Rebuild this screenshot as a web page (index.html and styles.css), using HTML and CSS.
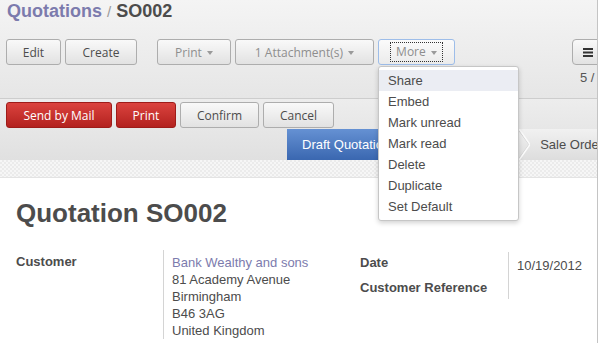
FILE: index.html
```html
<!DOCTYPE html>
<html lang="en">
<head>
    <meta charset="UTF-8">
    <title>Quotations / SO002</title>
    <link rel="stylesheet" href="styles.css">
</head>
<body>
    <div class="page">
        <div class="view-header">
            <h2 class="breadcrumb">
                <a class="crumb" href="#">Quotations</a>
                <span class="sep">/</span>
                <span class="current">SO002</span>
            </h2>
            <div class="header-row">
                <div class="btn-groups">
                    <div class="btn-group">
                        <button class="btn w-edit">Edit</button>
                        <button class="btn w-create">Create</button>
                    </div>
                    <div class="btn-group">
                        <button class="btn muted w-print">Print <span class="caret"></span></button>
                        <button class="btn muted w-attach">1 Attachment(s) <span class="caret"></span></button>
                        <div class="dropdown">
                            <button class="btn muted focused w-more"><span class="focus-ring">More <span class="caret"></span></span></button>
                            <ul class="menu">
                                <li class="active">Share</li>
                                <li>Embed</li>
                                <li>Mark unread</li>
                                <li>Mark read</li>
                                <li>Delete</li>
                                <li>Duplicate</li>
                                <li>Set Default</li>
                            </ul>
                        </div>
                    </div>
                </div>
                <div class="pager-col">
                    <button class="btn switch">
                        <svg width="10" height="9" viewBox="0 0 10 9"><rect x="0" y="0" width="10" height="2" fill="#333"/><rect x="0" y="3.5" width="10" height="2" fill="#333"/><rect x="0" y="7" width="10" height="2" fill="#333"/></svg>
                    </button>
                    <div class="pager">5 /</div>
                </div>
            </div>
        </div>

        <div class="form-header">
            <div class="btn-group">
                <button class="btn primary w-mail">Send by Mail</button>
                <button class="btn primary w-rprint">Print</button>
                <button class="btn w-confirm">Confirm</button>
                <button class="btn w-cancel">Cancel</button>
            </div>
            <ul class="statusbar">
                <li class="step current">Draft Quotation</li>
                <li class="arrow">
                    <svg width="13" height="31" viewBox="0 0 13 31">
                        <defs>
                            <linearGradient id="blue" x1="0" y1="0" x2="0" y2="1">
                                <stop offset="0" stop-color="#6591d3"/>
                                <stop offset="1" stop-color="#3a67b0"/>
                            </linearGradient>
                        </defs>
                        <polygon points="0,0 12,15.5 0,31" fill="url(#blue)"/>
                    </svg>
                </li>
                <li class="step hidden-step"></li>
                <li class="arrow">
                    <svg width="13" height="31" viewBox="0 0 13 31">
                        <polyline points="0,-1 12,15.5 0,32" fill="none" stroke="#d2d2d2" stroke-width="1"/>
                        <polyline points="1.5,-1 13,15.5 1.5,32" fill="none" stroke="#fbfbfb" stroke-width="1.5"/>
                    </svg>
                </li>
                <li class="step last">Sale Orde</li>
            </ul>
        </div>

        <div class="sheet-bg"></div>

        <div class="sheet">
            <h1 class="title">Quotation SO002</h1>
            <div class="groups">
                <div class="group group-left">
                    <div class="label">Customer</div>
                    <div class="value address">
                        <a class="link" href="#">Bank Wealthy and sons</a><br>
                        81 Academy Avenue<br>
                        Birmingham<br>
                        B46 3AG<br>
                        United Kingdom
                    </div>
                </div>
                <div class="group group-right">
                    <div class="label row-first">Date</div>
                    <div class="value date">10/19/2012</div>
                    <div class="label row-second">Customer Reference</div>
                    <div class="value"></div>
                </div>
            </div>
        </div>
    </div>
</body>
</html>
```

FILE: styles.css
```css
* {
    box-sizing: border-box;
}
body {
    margin: 0;
    background: #fff;
    font-family: "Liberation Sans", Arial, sans-serif;
    font-size: 13px;
    color: #4c4c4c;
}
.page {
    width: 598px;
    height: 343px;
    border-right: 1px solid #c4c4c4;
    overflow: hidden;
}

/* top header */
.view-header {
    height: 99px;
    padding-left: 6px;
    background: linear-gradient(#f4f4f4, #e6e6e6);
    border-bottom: 1px solid #cdcdcd;
}
.breadcrumb {
    margin: 0;
    padding: 1px 0 0 1px;
    font-size: 18px;
    line-height: 20px;
    font-weight: bold;
    white-space: nowrap;
}
.crumb {
    color: #7c7bad;
    text-decoration: none;
}
.sep {
    color: #9a9a9a;
    font-weight: normal;
    font-size: 15px;
}
.current {
    color: #4c4c4c;
}
.header-row {
    display: flex;
    margin-top: 17px;
}
.btn-groups {
    display: flex;
    gap: 20px;
}
.btn-group {
    display: flex;
    gap: 4px;
}
.btn {
    height: 26px;
    margin: 0;
    padding: 0;
    border: 1px solid #adadad;
    border-radius: 3px;
    background: linear-gradient(#f9f9f9, #e2e2e2);
    font-family: "Open Sans", sans-serif;
    font-size: 12px;
    color: #4c4c4c;
    text-align: center;
    white-space: nowrap;
}
.btn.muted {
    color: #8e8e8e;
}
.btn.focused {
    border-color: #9dbde9;
    background: linear-gradient(#fbfbfb, #ebebeb);
}
.focus-ring {
    display: inline-block;
    padding: 0 5px;
    line-height: 18px;
    border: 1px dotted #333;
}
.caret {
    display: inline-block;
    width: 0;
    height: 0;
    margin-left: 2px;
    vertical-align: middle;
    border-left: 3.5px solid transparent;
    border-right: 3.5px solid transparent;
    border-top: 4px solid #9a9a9a;
}
.w-edit { width: 55px; }
.w-create { width: 72px; }
.w-print { width: 74px; }
.w-attach { width: 139px; }
.w-more { width: 77px; }
.w-mail { width: 106px; }
.w-rprint { width: 60px; }
.w-confirm { width: 79px; }
.w-cancel { width: 71px; }

.dropdown {
    position: relative;
}
.menu {
    position: absolute;
    left: 0;
    top: 27px;
    z-index: 10;
    width: 141px;
    margin: 0;
    padding: 3px 0;
    list-style: none;
    background: #fff;
    border: 1px solid #c6c6c6;
    border-radius: 3px;
    box-shadow: 0 2px 5px rgba(0, 0, 0, 0.18);
}
.menu li {
    height: 21px;
    line-height: 21px;
    padding-left: 9px;
    color: #4c4c4c;
}
.menu li.active {
    background: #ebedf3;
}

.pager-col {
    margin-left: auto;
    width: 25px;
}
.btn.switch {
    width: 40px;
    height: 26px;
    padding-left: 10px;
    text-align: left;
    border-radius: 4px;
}
.btn.switch svg {
    display: block;
}
.pager {
    margin-top: 2px;
    padding-left: 8px;
    line-height: 17px;
    color: #555;
    white-space: nowrap;
}

/* form header with workflow buttons and statusbar */
.form-header {
    height: 61px;
    padding: 3px 0 0 6px;
    background: linear-gradient(#ededed, #e0e0e0);
}
.btn.primary {
    color: #fff;
    border-color: #9e1c19;
    background: linear-gradient(#db433e, #b3221f);
}
.statusbar {
    display: flex;
    margin: 1px 0 0 281px;
    padding: 0;
    list-style: none;
    height: 31px;
    overflow: hidden;
    background: linear-gradient(#f1f1f1, #dddddd);
    white-space: nowrap;
}
.statusbar li {
    flex-shrink: 0;
}
.step {
    padding: 0 6px 0 10px;
    line-height: 31px;
    color: #4c4c4c;
}
.step.current {
    padding: 0 11px 0 15px;
    color: #fff;
    background: linear-gradient(#6591d3, #3a67b0);
}
.hidden-step {
    width: 103px;
}
.step.last {
    padding-right: 0;
}
.arrow svg {
    display: block;
}

.sheet-bg {
    height: 18px;
    background: repeating-conic-gradient(#ebebeb 0 25%, #f6f6f6 0 50%) 0 0 / 4px 4px;
    border-bottom: 1px solid #e3e3e3;
}

/* sheet */
.sheet {
    padding: 0 16px;
}
.title {
    margin: 20px 0 0;
    font-size: 26px;
    line-height: 30px;
    font-weight: bold;
    color: #4c4c4c;
}
.groups {
    display: flex;
    align-items: flex-start;
    margin-top: 22px;
}
.group {
    display: grid;
    line-height: 17px;
}
.group-left {
    grid-template-columns: 147px 197px;
}
.group-right {
    flex: 1;
    margin-top: 2px;
    grid-template-columns: 148px 1fr;
}
.label {
    font-weight: bold;
    white-space: nowrap;
}
.group-left .label {
    padding-top: 3px;
}
.value {
    border-left: 1px solid #d4d4d4;
    padding-left: 8px;
}
.address {
    padding-top: 4px;
}
.link {
    color: #7c7bad;
    text-decoration: none;
}
.row-first {
    padding: 2px 0 5px;
}
.row-second {
    padding: 3px 0 3px;
}
.date {
    padding-top: 5px;
}
```
